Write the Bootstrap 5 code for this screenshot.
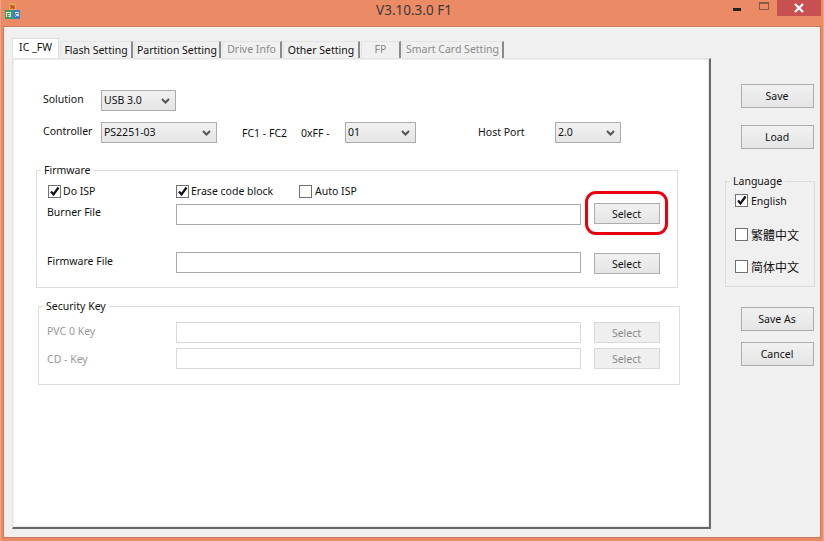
<!DOCTYPE html>
<html lang="en">
<head>
<meta charset="utf-8">
<title>V3.10.3.0 F1</title>
<link href="https://cdn.jsdelivr.net/npm/bootstrap@5.3.0/dist/css/bootstrap.min.css" rel="stylesheet">
<style>
html,body{margin:0;background:#eb8b66;overflow:hidden}
body{font:10.5px/14px "Noto Sans","Noto Sans CJK TC",sans-serif;color:#111}
.app-win{width:824px;height:541px;background:#eb8b66;display:flex;flex-direction:column;padding:0 3px 3px;box-shadow:inset 1px 0 0 #f3a283,inset -1px 0 0 #f3a283}
.title-bar{height:26px;flex:none;display:grid;grid-template-columns:1fr auto 1fr;margin:0 -3px;padding-right:3px}
.title-icon{padding:3px 0 0 4px;line-height:0}
.title-text{font-size:13.5px;line-height:20px;color:#3a3a3a;margin-left:7px}
.win-ctrls{display:flex;justify-content:flex-end;align-items:flex-start}
.ctl-min{width:8px;height:3px;background:#222;margin:8px 18px 0 0}
.ctl-max{width:10px;height:8px;border:1px solid #8a5a44;border-top-width:2px;margin:2px 8px 0 0}
.ctl-close{width:44px;height:16px;background:#c75050;display:flex;align-items:center;justify-content:center;line-height:0}
.client{flex:1;background:#f0f0f0;border:1px solid #c87a5a;display:flex;min-height:0;width:818px}
.left-area{width:707px;flex:none;padding:11px 0 0 8px}
.right-area{flex:1;padding:57px 0 0 30px;width:110px}
.tab-strip{display:flex;flex-wrap:nowrap;height:20px;border:0;align-items:flex-end;gap:1px;margin:0}
.tab-strip .nav-link{height:17px;padding:0;border:0;border-radius:0;background:#f0f0f0;border-top:1px solid #e4e4e4;border-left:1px solid #e4e4e4;border-right:2px solid #8a8a8a;color:#111;font-size:10.5px;line-height:17px;text-align:center;white-space:nowrap}
.tab-strip .nav-link.disabled{color:#8a8a8a;line-height:15px}
.tab-strip .nav-link.active{height:20px;background:#fff;border-right:1px solid #dcdcdc;border-top:1px solid #dcdcdc;line-height:16px}
.tw1{width:47px}.tw2{width:73px}.tw3{width:87px}.tw4{width:60px}.tw5{width:77px}.tw6{width:40px}.tw7{width:102px}
.sheet{width:699px;height:471px;background:#fff;border:1px solid #e4e4e4;border-right:2px solid #696969;border-bottom:2px solid #696969;box-shadow:inset 1px 1px 0 #efefef,inset -1px -1px 0 #e8e8e8;padding-top:31px}
.top-row{display:flex;align-items:center;height:21px;margin-left:30px}
.top-row + .top-row{margin-top:11px}
.lbl-a{width:58px;margin-top:-3px}
.form-select.drop{height:21px;border:1px solid #acacac;border-radius:0;padding:0 0 0 2px;font-size:10.5px;line-height:19px;color:#111;background-color:#ececec;background-image:url("data:image/svg+xml,%3Csvg xmlns='http://www.w3.org/2000/svg' width='9' height='6'%3E%3Cpath d='M1 1l3.500 3.500L8 1' fill='none' stroke='%23555' stroke-width='2'/%3E%3C/svg%3E"),linear-gradient(#f1f1f1,#e5e5e5);background-repeat:no-repeat;background-position:right 5px center,0 0;background-size:9px 6px,100% 100%;flex:none}
.w75{width:75px}.w116{width:116px}.w71{width:71px}.w66{width:66px}
.fc-a{width:59px;margin-left:25px}.fc-b{width:44px}.fc-c{width:77px;margin-left:62px;margin-top:-2px}
.grp{display:block;border:1px solid #dcdcdc;width:642px;padding:0;margin:0}
.grp legend{float:none;width:auto;margin:0 0 0 4px;padding:0 3px;font-size:10.5px;line-height:14px;color:#111}
.grp-fw{margin:20px 0 0 23px;height:125px}
.grp-key{margin:11px 0 0 25px;height:86px}
.chk-row{display:flex;height:14px;margin:7px 0 0 11px;align-items:center}
.chk-cell{display:flex;align-items:center;gap:2px}
.c1{width:128px}.c2{width:123px}.c3{gap:3px}
.form-check-input.tick{width:13px;height:13px;margin:0;flex:none;border:1px solid #707070;border-radius:0;background-color:#fff;box-shadow:none}
.form-check-input.tick:checked{background-color:#fff;border-color:#707070;background-image:url("data:image/svg+xml,%3Csvg xmlns='http://www.w3.org/2000/svg' width='11' height='11'%3E%3Cpath d='M2 5.500l2.500 3L9.500 1.500' fill='none' stroke='%23111' stroke-width='2.200'/%3E%3C/svg%3E");background-size:11px 11px}
.f-row{display:flex;align-items:flex-start;margin-left:10px}
.f-burner{margin-top:5px}.f-firm{margin-top:27px}
.f-pvc{margin-top:9px;margin-left:8px}.f-cd{margin-top:5px;margin-left:8px}
.f-lbl{width:129px;flex:none;padding-top:2px}
.f-pvc .f-lbl,.f-cd .f-lbl{width:129px;color:#9a9a9a;padding-top:2px}
.f-cd .f-lbl{padding-top:4px}
.form-control.field{width:405px;height:21px;min-height:0;flex:none;border:1px solid #ababab;border-radius:0;padding:0 3px;background:#fff;box-shadow:none}
.f-burner .field{margin-top:1px}
.f-firm .btn-wrap{margin-top:1px}
.form-control.field:disabled{background:#fff;border:1px solid #d9d9d9}
.btn-wrap{margin-left:13px;position:relative;flex:none}
.btn.win-btn{display:block;padding:0 1px 0 0;border:1px solid #acacac;border-radius:0;background:linear-gradient(#f1f1f1,#e5e5e5);color:#111;font-size:10.5px;line-height:14px;text-align:center}
.btn.win-btn:disabled{background:#efefef;border-color:#d9d9d9;color:#8a8a8a;opacity:1}
.sel-btn{width:66px;height:21px}
.side-btn{width:73px;height:24px}
.mt-load{margin-top:17px}.mt-saveas{margin-top:20px}.mt-cancel{margin-top:11px}
.grp-lang{width:90px;height:113px;margin:25px 0 0 -16px}
.lang-row{display:flex;align-items:center;gap:3px;height:13px;margin-left:9px}
.lang-1{margin-top:6px}.lang-2{margin-top:21px}.lang-3{margin-top:19px}
.hl-ring{position:absolute;left:-9px;top:-12px;width:83px;height:44px;border:3px solid #e8000f;border-radius:11px;pointer-events:none}
.sc-text{font-family:"Noto Sans CJK SC","Noto Sans",sans-serif;font-size:12px}
.tc-text{font-family:"Noto Sans CJK TC","Noto Sans",sans-serif;font-size:12px}
.ico-letter{font:700 6px "Liberation Sans",sans-serif;text-anchor:middle}
</style>
</head>
<body>
<div class="app-win">
  <div class="title-bar">
    <div class="title-icon">
      <svg width="17" height="17" viewBox="0 0 17 17" role="img" aria-label="App icon">
        <rect x="5" y="0" width="7" height="7" fill="#e9a24d"/>
        <rect x="1" y="7" width="8" height="9" fill="#3f9a63"/>
        <rect x="9" y="7" width="7" height="9" fill="#3f7fc0"/>
        <rect x="2" y="9" width="5" height="5" fill="#d9efe0"/>
        <rect x="11" y="9" width="4" height="5" fill="#dbe9f7"/>
        <text class="ico-letter" x="8.500" y="6" fill="#b3261c">N</text>
        <text class="ico-letter" x="4.500" y="14" fill="#1d7a43">F</text>
        <text class="ico-letter" x="13" y="14" fill="#1f5fa8">C</text>
      </svg>
    </div>
    <div class="title-text">V3.10.3.0 F1</div>
    <div class="win-ctrls">
      <div class="ctl-min"></div>
      <div class="ctl-max"></div>
      <div class="ctl-close">
        <svg width="10" height="10" viewBox="0 0 10 10"><path d="M1 1l8 8M9 1l-8 8" stroke="#fff" stroke-width="2.200"/></svg>
      </div>
    </div>
  </div>
  <div class="client">
    <div class="left-area">
      <ul class="nav tab-strip">
        <li class="nav-item"><a class="nav-link active tw1">IC _FW</a></li>
        <li class="nav-item"><a class="nav-link tw2">Flash Setting</a></li>
        <li class="nav-item"><a class="nav-link tw3">Partition Setting</a></li>
        <li class="nav-item"><a class="nav-link disabled tw4">Drive Info</a></li>
        <li class="nav-item"><a class="nav-link tw5">Other Setting</a></li>
        <li class="nav-item"><a class="nav-link disabled tw6">FP</a></li>
        <li class="nav-item"><a class="nav-link disabled tw7">Smart Card Setting</a></li>
      </ul>
      <div class="sheet">
        <div class="top-row">
          <span class="lbl-a">Solution</span>
          <select class="form-select drop w75"><option>USB 3.0</option></select>
        </div>
        <div class="top-row">
          <span class="lbl-a">Controller</span>
          <select class="form-select drop w116"><option>PS2251-03</option></select>
          <span class="fc-a">FC1 - FC2</span>
          <span class="fc-b">0xFF -</span>
          <select class="form-select drop w71"><option>01</option></select>
          <span class="fc-c">Host Port</span>
          <select class="form-select drop w66"><option>2.0</option></select>
        </div>
        <fieldset class="grp grp-fw">
          <legend>Firmware</legend>
          <div class="chk-row">
            <label class="chk-cell c1"><input class="form-check-input tick" type="checkbox" checked>Do ISP</label>
            <label class="chk-cell c2"><input class="form-check-input tick" type="checkbox" checked>Erase code block</label>
            <label class="chk-cell c3"><input class="form-check-input tick" type="checkbox">Auto ISP</label>
          </div>
          <div class="f-row f-burner">
            <span class="f-lbl">Burner File</span>
            <input class="form-control field" type="text">
            <div class="btn-wrap">
              <button class="btn win-btn sel-btn" type="button">Select</button>
              <div class="hl-ring"></div>
            </div>
          </div>
          <div class="f-row f-firm">
            <span class="f-lbl">Firmware File</span>
            <input class="form-control field" type="text">
            <div class="btn-wrap"><button class="btn win-btn sel-btn" type="button">Select</button></div>
          </div>
        </fieldset>
        <fieldset class="grp grp-key">
          <legend>Security Key</legend>
          <div class="f-row f-pvc">
            <span class="f-lbl">PVC 0 Key</span>
            <input class="form-control field" type="text" disabled>
            <div class="btn-wrap"><button class="btn win-btn sel-btn" type="button" disabled>Select</button></div>
          </div>
          <div class="f-row f-cd">
            <span class="f-lbl">CD - Key</span>
            <input class="form-control field" type="text" disabled>
            <div class="btn-wrap"><button class="btn win-btn sel-btn" type="button" disabled>Select</button></div>
          </div>
        </fieldset>
      </div>
    </div>
    <div class="right-area">
      <button class="btn win-btn side-btn" type="button">Save</button>
      <button class="btn win-btn side-btn mt-load" type="button">Load</button>
      <fieldset class="grp grp-lang">
        <legend>Language</legend>
        <label class="lang-row lang-1"><input class="form-check-input tick" type="checkbox" checked>English</label>
        <label class="lang-row lang-2"><input class="form-check-input tick" type="checkbox"><span class="tc-text">繁體中文</span></label>
        <label class="lang-row lang-3"><input class="form-check-input tick" type="checkbox"><span class="sc-text">简体中文</span></label>
      </fieldset>
      <button class="btn win-btn side-btn mt-saveas" type="button">Save As</button>
      <button class="btn win-btn side-btn mt-cancel" type="button">Cancel</button>
    </div>
  </div>
</div>
<script src="https://cdn.jsdelivr.net/npm/bootstrap@5.3.0/dist/js/bootstrap.bundle.min.js"></script>
</body>
</html>
